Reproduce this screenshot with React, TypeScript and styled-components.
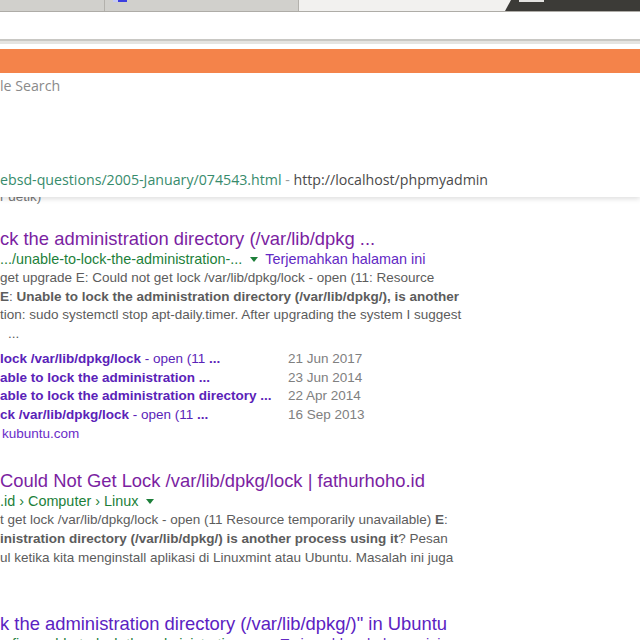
import React from "react";
import styled, { createGlobalStyle } from "styled-components";

const Global = createGlobalStyle`
  html, body { margin: 0; padding: 0; background: #fff; overflow: hidden; }
  #root { width: 640px; height: 640px; overflow: hidden; }
`;

const Window = styled.div`
  width: 640px;
  height: 640px;
  display: flex;
  flex-direction: column;
  overflow: hidden;
`;

const TabStrip = styled.div`
  height: 11px;
  display: flex;
  background: #3c3b37;
  border-bottom: 1px solid #aeaca7;
  flex-shrink: 0;
`;

const Tab = styled.div<{ $w: number; $active?: boolean }>`
  width: ${(p) => p.$w}px;
  height: 100%;
  flex-shrink: 0;
  position: relative;
  background: ${(p) => (p.$active ? "#f2f1ef" : "#d1d0cc")};
  border-right: ${(p) => (p.$active ? "none" : "1px solid #b3b1ac")};
  clip-path: ${(p) =>
    p.$active ? "polygon(0 0, 100% 0, calc(100% - 6px) 100%, 0 100%)" : "none"};
`;

const Favicon = styled.span`
  position: absolute;
  left: 8px;
  top: 0;
  width: 14px;
  height: 2px;
  background: linear-gradient(90deg, #c7cbf5 0 35%, #3c3fe0 35% 100%);
`;

const DarkArea = styled.div`
  flex: 1;
  position: relative;
`;

const WinButton = styled.span`
  position: absolute;
  left: 8px;
  top: 0;
  width: 25px;
  height: 2px;
  background: #e4e3e0;
`;

const Toolbar = styled.div`
  height: 27px;
  background: #fff;
  flex-shrink: 0;
`;

const ToolbarEdge = styled.div`
  height: 2px;
  background: #c9c8c4;
  border-bottom: 3px solid #e5e4e1;
  box-shadow: 0 1px 0 #cfceca;
  flex-shrink: 0;
`;

const Gap = styled.div`
  height: 5px;
  background: #fff;
  flex-shrink: 0;
`;

const OrangeBar = styled.div`
  height: 24px;
  background: #f4834a;
  flex-shrink: 0;
`;

const PageArea = styled.div`
  flex: 1;
  position: relative;
  background: #fff;
  overflow: hidden;
`;

const Popup = styled.div`
  position: absolute;
  left: 0;
  right: 0;
  top: 0;
  height: 124px;
  background: #fff;
  box-shadow: 0 2px 5px rgba(0, 0, 0, 0.13);
  z-index: 2;
  display: flex;
  flex-direction: column;
  font-family: "Open Sans", "Noto Sans", sans-serif;
  font-size: 14.2px;
  line-height: 20px;
`;

const PopupRow = styled.div<{ $mt: number }>`
  margin-top: ${(p) => p.$mt}px;
  white-space: nowrap;
  color: #8a8a8a;
`;

const PopupUrl = styled.span`
  color: #378b6c;
`;

const PopupSep = styled.span`
  color: #9a9a9a;
`;

const PopupTitle = styled.span`
  color: #4a4a4a;
`;

const Results = styled.div`
  padding-top: 114px;
  font-family: "Liberation Sans", Arial, sans-serif;
  white-space: nowrap;
`;

const Stats = styled.div`
  font-size: 13.5px;
  line-height: 20px;
  color: #777;
  margin-bottom: 20px;
`;

const Result = styled.div<{ $mb: number }>`
  margin-bottom: ${(p) => p.$mb}px;
`;

const Title = styled.div<{ $c?: string }>`
  font-size: 18.4px;
  line-height: 23px;
  color: ${(p) => p.$c ?? "#7b1fa2"};
`;

const UrlLine = styled.div`
  font-size: 14.4px;
  line-height: 18px;
  color: #1d7f3a;
  display: flex;
  align-items: center;
`;

const Caret = styled.span`
  display: inline-block;
  width: 0;
  height: 0;
  border-left: 4px solid transparent;
  border-right: 4px solid transparent;
  border-top: 5px solid #1d7f3a;
  margin: 1px 7px 0 8px;
`;

const Translate = styled.span`
  color: #6228c4;
`;

const Snippet = styled.div<{ $pl?: number }>`
  font-size: 13.5px;
  line-height: 18.7px;
  color: #5c5c5c;
  padding-left: ${(p) => p.$pl ?? 0}px;
`;

const FirstSnippet = styled(Snippet)`
  margin-top: 1px;
`;

const B = styled.b`
  font-weight: bold;
`;

const Sitelinks = styled.div`
  margin-top: 6px;
  display: grid;
  grid-template-columns: 288px auto;
  font-size: 13.5px;
  line-height: 18.7px;
`;

const SiteLink = styled.div`
  color: #5a22b8;
`;

const SiteDate = styled.div`
  color: #808080;
`;

const More = styled.div`
  grid-column: 1 / span 2;
  color: #6a2cc8;
  padding-left: 2px;
`;

const sitelinks: [React.ReactNode, string][] = [
  [<><B>lock /var/lib/dpkg/lock</B> - open (11 <B>...</B></>, "21 Jun 2017"],
  [<B>able to lock the administration ...</B>, "23 Jun 2014"],
  [<B>able to lock the administration directory ...</B>, "22 Apr 2014"],
  [<><B>ck /var/lib/dpkg/lock</B> - open (11 <B>...</B></>, "16 Sep 2013"],
];

export default function App() {
  return (
    <>
      <Global />
      <Window>
        <TabStrip>
          <Tab $w={104} />
          <Tab $w={193}>
            <Favicon />
          </Tab>
          <Tab $w={212} $active />
          <DarkArea>
            <WinButton />
          </DarkArea>
        </TabStrip>
        <Toolbar />
        <ToolbarEdge />
        <Gap />
        <OrangeBar />
        <PageArea>
          <Popup>
            <PopupRow $mt={3}>le Search</PopupRow>
            <PopupRow $mt={74}>
              <PopupUrl>ebsd-questions/2005-January/074543.html</PopupUrl>
              <PopupSep> - </PopupSep>
              <PopupTitle>http://localhost/phpmyadmin</PopupTitle>
            </PopupRow>
          </Popup>
          <Results>
            <Stats>r detik)</Stats>
            <Result $mb={26}>
              <Title>ck the administration directory (/var/lib/dpkg ...</Title>
              <UrlLine>
                .../unable-to-lock-the-administration-...
                <Caret />
                <Translate>Terjemahkan halaman ini</Translate>
              </UrlLine>
              <FirstSnippet>get upgrade E: Could not get lock /var/lib/dpkg/lock - open (11: Resource</FirstSnippet>
              <Snippet>
                <B>E</B>: <B>Unable to lock the administration directory (/var/lib/dpkg/), is another</B>
              </Snippet>
              <Snippet>tion: sudo systemctl stop apt-daily.timer. After upgrading the system I suggest</Snippet>
              <Snippet $pl={8}>...</Snippet>
              <Sitelinks>
                {sitelinks.map(([l, d], i) => (
                  <React.Fragment key={i}>
                    <SiteLink>{l}</SiteLink>
                    <SiteDate>{d}</SiteDate>
                  </React.Fragment>
                ))}
                <More>kubuntu.com</More>
              </Sitelinks>
            </Result>
            <Result $mb={45}>
              <Title>Could Not Get Lock /var/lib/dpkg/lock | fathurhoho.id</Title>
              <UrlLine>
                .id › Computer › Linux
                <Caret />
              </UrlLine>
              <FirstSnippet>
                t get lock /var/lib/dpkg/lock - open (11 Resource temporarily unavailable) <B>E</B>:
              </FirstSnippet>
              <Snippet>
                <B>inistration directory (/var/lib/dpkg/) is another process using it</B>? Pesan
              </Snippet>
              <Snippet>ul ketika kita menginstall aplikasi di Linuxmint atau Ubuntu. Masalah ini juga</Snippet>
            </Result>
            <Result $mb={0}>
              <Title $c="#5b22c2">k the administration directory (/var/lib/dpkg/)" in Ubuntu</Title>
              <UrlLine>
                ...fix-unable-to-lock-the-administration-...
                <Caret />
                <Translate>Terjemahkan halaman ini</Translate>
              </UrlLine>
            </Result>
          </Results>
        </PageArea>
      </Window>
    </>
  );
}
